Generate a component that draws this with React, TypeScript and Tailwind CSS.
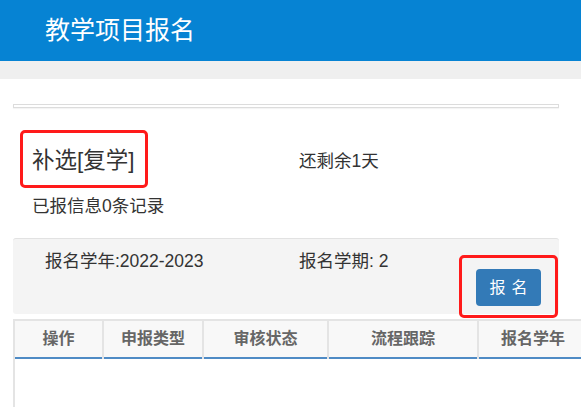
import React from "react";

const columns = [
    { name: "操作", w: "w-[89px]" },
    { name: "申报类型", w: "w-[100px]" },
    { name: "审核状态", w: "w-[125px]" },
    { name: "流程跟踪", w: "w-[150px]" },
    { name: "报名学年", w: "w-[110px]" },
    { name: "报名学期", w: "w-[110px]" },
];

const App: React.FC = () => {
    return (
        <div className="w-[581px] h-[407px] overflow-hidden bg-white text-[#333] font-['Liberation_Sans','Noto_Sans_CJK_SC',sans-serif]">
            <div className="h-[61px] bg-[#0683d3] flex items-center pl-[45px]">
                <h1 className="text-white text-[25px] leading-none">教学项目报名</h1>
            </div>
            <div className="h-[18px] bg-[#efefef]"></div>

            <div className="pl-[13px]">
                <div className="w-[546px] mt-[25px] h-[4px] border border-[#dcdcdc] shadow-[0_1px_1px_rgba(0,0,0,0.05)]"></div>

                <div className="flex items-center mt-[22px] w-[546px]">
                    <div className="ml-[7px] w-[128px] h-[58px] border-[3px] border-[#ff1a1a] rounded-[5px] flex items-center pl-[9px] pt-[5px]">
                        <span className="text-[22.5px] leading-none">补选[复学]</span>
                    </div>
                    <span className="ml-[151px] pt-[4px] text-[17.5px]">还剩余1天</span>
                </div>
                <div className="ml-[19px] mt-[8px] text-[17.5px] leading-[20px]">已报信息0条记录</div>

                <div className="mt-[22px] w-[546px] h-[76px] bg-[#f4f4f4] border-t border-[#e2e2e2] rounded-[3px] flex">
                    <div className="pl-[32px] pt-[12px] w-[286px] text-[17.5px] leading-[20px]">报名学年:2022-2023</div>
                    <div className="pt-[12px] w-[160px] text-[17.5px] leading-[20px]">报名学期: 2</div>
                    <div className="pt-[16px]">
                        <div className="w-[99px] h-[63px] border-[3px] border-[#ff1a1a] rounded-[5px] flex items-center justify-center pt-[2px]">
                            <button className="w-[65px] h-[37px] bg-[#337ab7] rounded-[4px] text-white text-[16px] tracking-[6px] pl-[6px]">报名</button>
                        </div>
                    </div>
                </div>

                <table className="mt-[5px] border-collapse table-fixed w-[684px]">
                    <thead>
                        <tr className="h-[38px] bg-[#f8f8f8] border-b-2 border-[#4f8bc5]">
                            {columns.map((c) => (
                                <th key={c.name} className={`${c.w} border-x-2 border-t-2 border-[#e4e4e4] text-[16px] font-bold text-[#666] text-center`}>
                                    {c.name}
                                </th>
                            ))}
                        </tr>
                    </thead>
                    <tbody>
                        <tr className="h-[60px]">
                            <td className="border-l-2 border-[#e4e4e4]"></td>
                            <td></td>
                            <td></td>
                            <td></td>
                            <td></td>
                            <td></td>
                        </tr>
                    </tbody>
                </table>
            </div>
        </div>
    );
};

export default App;
